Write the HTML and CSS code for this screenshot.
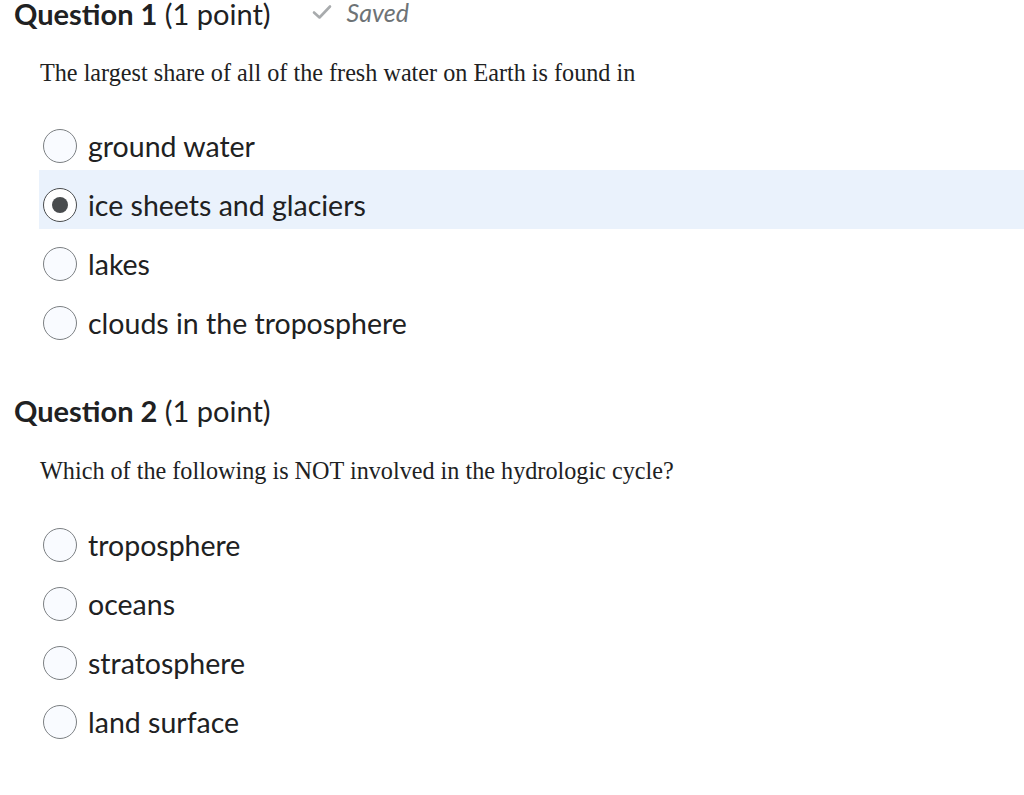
FILE: index.html
```html
<!DOCTYPE html>
<html>
<head>
<meta charset="utf-8">
<link rel="stylesheet" href="styles.css">
</head>
<body>
<section class="question q1">
  <div class="qhead">
    <h2 class="qtitle"><strong>Question 1</strong> (1 point)</h2>
    <span class="saved">
      <svg class="check" width="20" height="16" viewBox="0 0 20 16"><path d="M2 8.5 L7.5 13.5 L18 2.5" fill="none" stroke="#a8abad" stroke-width="2.6" stroke-linecap="round" stroke-linejoin="round"/></svg>
      Saved
    </span>
  </div>
  <p class="prompt">The largest share of all of the fresh water on Earth is found in</p>
  <div class="options">
    <label class="option"><span class="radio"></span><span class="otext">ground water</span></label>
    <label class="option selected"><span class="radio"><span class="dot"></span></span><span class="otext">ice sheets and glaciers</span></label>
    <label class="option"><span class="radio"></span><span class="otext">lakes</span></label>
    <label class="option"><span class="radio"></span><span class="otext">clouds in the troposphere</span></label>
  </div>
</section>
<section class="question q2">
  <div class="qhead">
    <h2 class="qtitle"><strong>Question 2</strong> (1 point)</h2>
  </div>
  <p class="prompt">Which of the following is NOT involved in the hydrologic cycle?</p>
  <div class="options">
    <label class="option"><span class="radio"></span><span class="otext">troposphere</span></label>
    <label class="option"><span class="radio"></span><span class="otext">oceans</span></label>
    <label class="option"><span class="radio"></span><span class="otext">stratosphere</span></label>
    <label class="option"><span class="radio"></span><span class="otext">land surface</span></label>
  </div>
</section>
</body>
</html>
```
FILE: styles.css
```css
html, body {
  margin: 0;
  padding: 0;
  background: #ffffff;
}
body {
  font-family: Lato, "Noto Sans", sans-serif;
  color: #202122;
  width: 1024px;
  overflow: hidden;
}
.question {
  display: flex;
  flex-direction: column;
}
.q2 {
  margin-top: 51px;
}
.qhead {
  display: flex;
  align-items: center;
  height: 28px;
  padding-left: 14px;
}
.q2 .qhead {
  margin-top: -1px;
}
.qtitle {
  margin: 0;
  font-size: 29px;
  line-height: 26px;
  font-weight: 400;
  color: #202122;
}
.qtitle strong {
  font-weight: 700;
}
.saved {
  display: flex;
  align-items: center;
  margin-left: 41px;
  font-style: italic;
  font-size: 25px;
  line-height: 26px;
  color: #6e7376;
  gap: 15px;
  margin-top: -4px;
}
.prompt {
  margin: 33px 0 0 0;
  padding-left: 40px;
  font-family: "Liberation Serif", "Times New Roman", serif;
  font-size: 24.2px;
  line-height: 24px;
  color: #202122;
}
.q2 .prompt {
  margin-top: 34px;
}
.options {
  display: flex;
  flex-direction: column;
  margin-top: 26px;
  margin-left: 39px;
}
.q2 .options {
  margin-top: 27px;
}
.option {
  display: flex;
  align-items: center;
  height: 34px;
  padding: 18px 0 7px 4px;
  font-size: 28.5px;
}
.option.selected {
  background: #eaf2fc;
}
.radio {
  box-sizing: border-box;
  width: 34px;
  height: 34px;
  border-radius: 50%;
  border: 1.5px solid #7c8083;
  background: #f9fbff;
  display: flex;
  align-items: center;
  justify-content: center;
  flex: none;
}
.selected .radio {
  border-color: #494c4e;
  background: #ffffff;
}
.dot {
  width: 16px;
  height: 16px;
  border-radius: 50%;
  background: #494c4e;
}
.otext {
  margin-left: 11px;
  line-height: 34px;
}
```
